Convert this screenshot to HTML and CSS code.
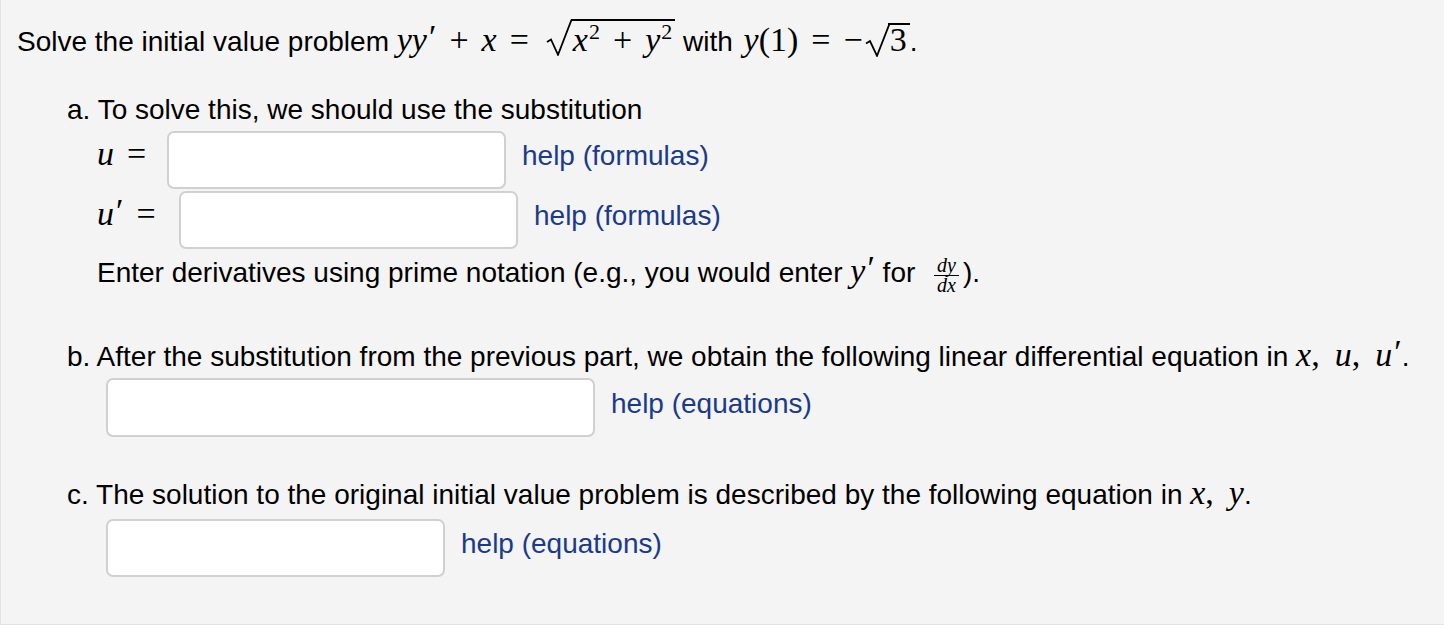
FILE: index.html
```html
<!DOCTYPE html>
<html>
<head>
<meta charset="utf-8">
<link rel="stylesheet" href="styles.css">
</head>
<body>
<div class="problem">
  <p class="intro">Solve the initial value problem <span class="m"><i>yy</i><span class="pr">′</span><span class="op">+</span><i>x</i><span class="op eq">=</span><span class="sqrt"><svg class="rad" width="26" height="37" viewBox="0 0 26 37"><path d="M1 23 L5 20.5 L12 35.8 L25.5 0.8" fill="none" stroke="#000" stroke-width="1.8"/></svg><span class="under"><i>x</i><sup>2</sup><span class="op">+</span><i>y</i><sup>2</sup></span></span></span> with <span class="m"><i class="yl">y</i>(1)<span class="op eq">=</span>−<span class="sqrt sqrt-s"><svg class="rad" width="25" height="34" viewBox="0 0 25 34"><path d="M1 20.5 L5 18 L12 32.8 L24.5 0.8" fill="none" stroke="#000" stroke-width="1.8"/></svg><span class="under">3</span></span></span>.</p>

  <div class="part part-a">
    <p class="q">a. To solve this, we should use the substitution</p>
    <div class="row row1">
      <span class="lbl lbl-u m"><i>u</i><span class="op eq">=</span></span>
      <span class="field f-a"></span>
      <a class="help">help (formulas)</a>
    </div>
    <div class="row row2">
      <span class="lbl lbl-up m"><i>u</i><span class="pr">′</span><span class="op eq">=</span></span>
      <span class="field f-a"></span>
      <a class="help">help (formulas)</a>
    </div>
    <p class="note">Enter derivatives using prime notation (e.g., you would enter <span class="m"><i>y</i><span class="pr">′</span></span> for <span class="frac"><span class="num"><i>dy</i></span><span class="den"><i>dx</i></span></span>).</p>
  </div>

  <div class="part part-b">
    <p class="q">b. After the substitution from the previous part, we obtain the following linear differential equation in <span class="m"><i>x</i>,<span class="cm"></span><i>u</i>,<span class="cm"></span><i>u</i><span class="pr">′</span></span>.</p>
    <div class="row row-b">
      <span class="field f-b"></span>
      <a class="help">help (equations)</a>
    </div>
  </div>

  <div class="part part-c">
    <p class="q">c. The solution to the original initial value problem is described by the following equation in <span class="m"><i>x</i>,<span class="cm"></span><i>y</i></span>.</p>
    <div class="row row-c">
      <span class="field f-c"></span>
      <a class="help">help (equations)</a>
    </div>
  </div>
</div>
</body>
</html>
```

FILE: styles.css
```css
html, body {
  margin: 0;
  padding: 0;
  background: #ffffff;
}
body {
  font-family: "Liberation Sans", Arial, Helvetica, sans-serif;
  font-size: 28px;
  color: #000;
}
.problem {
  box-sizing: border-box;
  height: 625px;
  background: #f4f4f4;
  border-left: 1px solid #e2e2e2;
  border-bottom: 1px solid #e2e2e2;
  padding: 0 0 0 16px;
}
p { margin: 0; }
.intro {
  padding-top: 19px;
  line-height: 36px;
}
.m {
  font-family: "Liberation Serif", "DejaVu Serif", serif;
  font-size: 34px;
  line-height: 28px;
  white-space: nowrap;
}
.m i { font-style: italic; }
.m sup {
  font-size: 22px;
  font-style: normal;
  vertical-align: 12px;
  line-height: 0;
  margin-left: 1px;
}
.pr {
  font-style: normal;
  margin-left: 2px;
  position: relative;
  top: -3px;
}
.op {
  margin: 0 13px;
}
.op.eq { margin: 0 13px; }
.cm { display: inline-block; width: 15px; }
.yl { margin-left: 3px; }
.sqrt {
  display: inline-block;
  position: relative;
  padding-left: 27px;
  margin-left: 4px;
}
.rad {
  position: absolute;
  left: 0;
  top: 0;
}
.under {
  display: inline-block;
  border-top: 2px solid #000;
  padding-top: 4px;
  line-height: 30px;
  padding-right: 3px;
  margin-left: -2px;
  padding-left: 2px;
}
.sqrt-s { margin-left: 2px; padding-left: 25px; }
.sqrt-s .under { padding-top: 0; }
.part { padding-left: 50px; }
.part-a { padding-top: 35px; }
.q { line-height: 30px; }
.row {
  display: flex;
  align-items: center;
}
.row1 { margin-top: 6px; padding-left: 30px; }
.row2 { margin-top: 2px; padding-left: 30px; }
.lbl {
  display: flex;
  align-items: baseline;
  margin-bottom: 12px;
}
.lbl .op { margin-right: 0; }
.lbl-u { width: 70px; }
.lbl-up { width: 82px; }
.field {
  box-sizing: border-box;
  display: block;
  height: 58px;
  background: #fff;
  border: 2px solid #d0d0d0;
  border-radius: 7px;
}
.f-a { width: 339px; }
.f-b { width: 489px; height: 59px; }
.f-c { width: 339px; }
.help {
  color: #1b3a8a;
  margin-left: 16px;
  margin-bottom: 8px;
  cursor: pointer;
}
.note {
  padding-left: 30px;
  margin-top: 5px;
  line-height: 38px;
}
.frac {
  display: inline-flex;
  flex-direction: column;
  align-items: center;
  vertical-align: 10px;
  font-family: "Liberation Serif", serif;
  font-size: 20px;
  line-height: 19px;
  margin: 0 4px 0 11px;
}
.num { border-bottom: 1px solid #000; padding: 0 3px; }
.part-b { padding-top: 46px; }
.row-b { padding-left: 39px; margin-top: 6px; }
.part-c { padding-top: 42px; }
.row-c { padding-left: 39px; margin-top: 9px; }
```
